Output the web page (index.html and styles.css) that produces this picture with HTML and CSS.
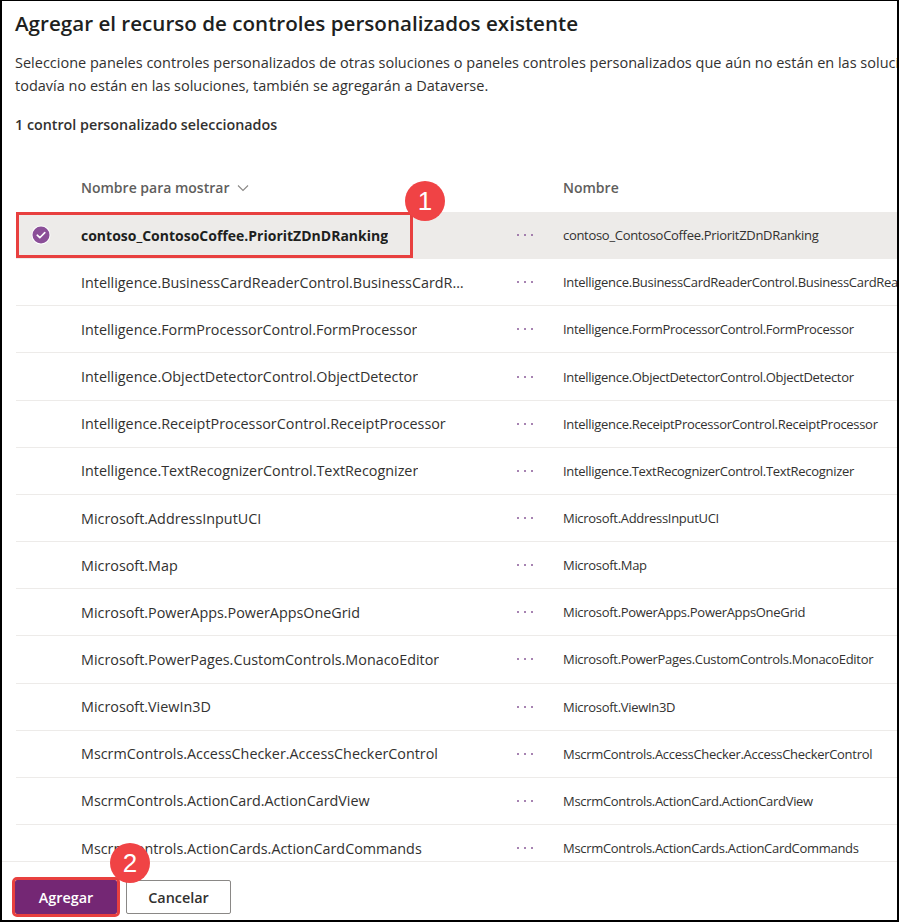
FILE: index.html
```html
<!DOCTYPE html>
<html lang="es">
<head>
<meta charset="utf-8">
<title>Agregar el recurso de controles personalizados existente</title>
<link rel="stylesheet" href="styles.css">
</head>
<body>
<div class="dialog">
  <header class="head">
    <h1 class="title">Agregar el recurso de controles personalizados existente</h1>
    <div class="desc">
      <div class="line">Seleccione paneles controles personalizados de otras soluciones o paneles controles personalizados que aún no están en las soluciones. Los paneles controles personalizados que</div>
      <div class="line">todavía no están en las soluciones, también se agregarán a Dataverse.</div>
    </div>
    <p class="count">1 control personalizado seleccionados</p>
  </header>

  <div class="list">
    <div class="row hdr">
      <div class="c-check"></div>
      <div class="c-name">Nombre para mostrar
        <svg class="chev" width="12" height="8" viewBox="0 0 12 8"><path d="M1 1.5 L6 6.5 L11 1.5" fill="none" stroke="#8a8886" stroke-width="1.1"/></svg>
      </div>
      <div class="c-dots"></div>
      <div class="c-id">Nombre</div>
    </div>

    <div class="row sel">
      <div class="c-check">
        <svg width="20" height="20" viewBox="0 0 20 20"><circle cx="10" cy="10" r="9.5" fill="#fff"/><circle cx="10" cy="10" r="8.5" fill="#8b4f98"/><path d="M6.2 10.2 L8.8 12.7 L13.8 7.6" fill="none" stroke="#fff" stroke-width="1.6" stroke-linecap="round" stroke-linejoin="round"/></svg>
      </div>
      <div class="c-name"><span class="t">contoso_ContosoCoffee.PrioritZDnDRanking</span></div>
      <div class="c-dots"><svg width="20" height="4" viewBox="0 0 20 4"><circle cx="3" cy="2" r="1" /><circle cx="10" cy="2" r="1"/><circle cx="17" cy="2" r="1"/></svg></div>
      <div class="c-id">contoso_ContosoCoffee.PrioritZDnDRanking</div>
    </div>

    <div class="row">
      <div class="c-check"></div>
      <div class="c-name"><span class="t">Intelligence.BusinessCardReaderControl.BusinessCardReader</span></div>
      <div class="c-dots"><svg width="20" height="4" viewBox="0 0 20 4"><circle cx="3" cy="2" r="1" /><circle cx="10" cy="2" r="1"/><circle cx="17" cy="2" r="1"/></svg></div>
      <div class="c-id">Intelligence.BusinessCardReaderControl.BusinessCardReader</div>
    </div>
    <div class="row">
      <div class="c-check"></div>
      <div class="c-name"><span class="t">Intelligence.FormProcessorControl.FormProcessor</span></div>
      <div class="c-dots"><svg width="20" height="4" viewBox="0 0 20 4"><circle cx="3" cy="2" r="1" /><circle cx="10" cy="2" r="1"/><circle cx="17" cy="2" r="1"/></svg></div>
      <div class="c-id">Intelligence.FormProcessorControl.FormProcessor</div>
    </div>
    <div class="row">
      <div class="c-check"></div>
      <div class="c-name"><span class="t">Intelligence.ObjectDetectorControl.ObjectDetector</span></div>
      <div class="c-dots"><svg width="20" height="4" viewBox="0 0 20 4"><circle cx="3" cy="2" r="1" /><circle cx="10" cy="2" r="1"/><circle cx="17" cy="2" r="1"/></svg></div>
      <div class="c-id">Intelligence.ObjectDetectorControl.ObjectDetector</div>
    </div>
    <div class="row">
      <div class="c-check"></div>
      <div class="c-name"><span class="t">Intelligence.ReceiptProcessorControl.ReceiptProcessor</span></div>
      <div class="c-dots"><svg width="20" height="4" viewBox="0 0 20 4"><circle cx="3" cy="2" r="1" /><circle cx="10" cy="2" r="1"/><circle cx="17" cy="2" r="1"/></svg></div>
      <div class="c-id">Intelligence.ReceiptProcessorControl.ReceiptProcessor</div>
    </div>
    <div class="row">
      <div class="c-check"></div>
      <div class="c-name"><span class="t">Intelligence.TextRecognizerControl.TextRecognizer</span></div>
      <div class="c-dots"><svg width="20" height="4" viewBox="0 0 20 4"><circle cx="3" cy="2" r="1" /><circle cx="10" cy="2" r="1"/><circle cx="17" cy="2" r="1"/></svg></div>
      <div class="c-id">Intelligence.TextRecognizerControl.TextRecognizer</div>
    </div>
    <div class="row">
      <div class="c-check"></div>
      <div class="c-name"><span class="t">Microsoft.AddressInputUCI</span></div>
      <div class="c-dots"><svg width="20" height="4" viewBox="0 0 20 4"><circle cx="3" cy="2" r="1" /><circle cx="10" cy="2" r="1"/><circle cx="17" cy="2" r="1"/></svg></div>
      <div class="c-id">Microsoft.AddressInputUCI</div>
    </div>
    <div class="row">
      <div class="c-check"></div>
      <div class="c-name"><span class="t">Microsoft.Map</span></div>
      <div class="c-dots"><svg width="20" height="4" viewBox="0 0 20 4"><circle cx="3" cy="2" r="1" /><circle cx="10" cy="2" r="1"/><circle cx="17" cy="2" r="1"/></svg></div>
      <div class="c-id">Microsoft.Map</div>
    </div>
    <div class="row">
      <div class="c-check"></div>
      <div class="c-name"><span class="t">Microsoft.PowerApps.PowerAppsOneGrid</span></div>
      <div class="c-dots"><svg width="20" height="4" viewBox="0 0 20 4"><circle cx="3" cy="2" r="1" /><circle cx="10" cy="2" r="1"/><circle cx="17" cy="2" r="1"/></svg></div>
      <div class="c-id">Microsoft.PowerApps.PowerAppsOneGrid</div>
    </div>
    <div class="row">
      <div class="c-check"></div>
      <div class="c-name"><span class="t">Microsoft.PowerPages.CustomControls.MonacoEditor</span></div>
      <div class="c-dots"><svg width="20" height="4" viewBox="0 0 20 4"><circle cx="3" cy="2" r="1" /><circle cx="10" cy="2" r="1"/><circle cx="17" cy="2" r="1"/></svg></div>
      <div class="c-id">Microsoft.PowerPages.CustomControls.MonacoEditor</div>
    </div>
    <div class="row">
      <div class="c-check"></div>
      <div class="c-name"><span class="t">Microsoft.ViewIn3D</span></div>
      <div class="c-dots"><svg width="20" height="4" viewBox="0 0 20 4"><circle cx="3" cy="2" r="1" /><circle cx="10" cy="2" r="1"/><circle cx="17" cy="2" r="1"/></svg></div>
      <div class="c-id">Microsoft.ViewIn3D</div>
    </div>
    <div class="row">
      <div class="c-check"></div>
      <div class="c-name"><span class="t">MscrmControls.AccessChecker.AccessCheckerControl</span></div>
      <div class="c-dots"><svg width="20" height="4" viewBox="0 0 20 4"><circle cx="3" cy="2" r="1" /><circle cx="10" cy="2" r="1"/><circle cx="17" cy="2" r="1"/></svg></div>
      <div class="c-id">MscrmControls.AccessChecker.AccessCheckerControl</div>
    </div>
    <div class="row">
      <div class="c-check"></div>
      <div class="c-name"><span class="t">MscrmControls.ActionCard.ActionCardView</span></div>
      <div class="c-dots"><svg width="20" height="4" viewBox="0 0 20 4"><circle cx="3" cy="2" r="1" /><circle cx="10" cy="2" r="1"/><circle cx="17" cy="2" r="1"/></svg></div>
      <div class="c-id">MscrmControls.ActionCard.ActionCardView</div>
    </div>
    <div class="row">
      <div class="c-check"></div>
      <div class="c-name"><span class="t">MscrmControls.ActionCards.ActionCardCommands</span></div>
      <div class="c-dots"><svg width="20" height="4" viewBox="0 0 20 4"><circle cx="3" cy="2" r="1" /><circle cx="10" cy="2" r="1"/><circle cx="17" cy="2" r="1"/></svg></div>
      <div class="c-id">MscrmControls.ActionCards.ActionCardCommands</div>
    </div>
    <div class="row">
      <div class="c-check"></div>
      <div class="c-name"><span class="t">MscrmControls.ActionHub.ActionHubControl</span></div>
      <div class="c-dots"></div>
      <div class="c-id">MscrmControls.ActionHub.ActionHubControl</div>
    </div>
  </div>

  <footer class="foot">
    <button class="btn primary">Agregar</button>
    <button class="btn">Cancelar</button>
  </footer>

  <div class="callout-box"></div>
  <div class="badge b1">1</div>
  <div class="badge b2">2</div>
</div>
</body>
</html>
```

FILE: styles.css
```css
* { box-sizing: border-box; }
html, body { margin: 0; padding: 0; background: #fff; }
body {
  font-family: "Open Sans", "Noto Sans", sans-serif;
  color: #323130;
}
.dialog {
  position: relative;
  width: 899px;
  height: 922px;
  border-style: solid;
  border-color: #000;
  border-width: 1px 2px 2px 2px;
  overflow: hidden;
  display: flex;
  flex-direction: column;
  background: #fff;
}
.head {
  padding: 8px 0 0 13px;
  flex: none;
  height: 164px;
}
.title {
  margin: 0;
  font-size: 20.6px;
  line-height: 29px;
  font-weight: 600;
  color: #201f1e;
  white-space: nowrap;
}
.desc {
  margin-top: 13px;
  font-size: 14.5px;
  line-height: 23px;
  color: #323130;
}
.desc .line { white-space: nowrap; }
.count {
  margin: 18px 0 0;
  font-size: 14.3px;
  line-height: 20px;
  font-weight: 600;
  color: #323130;
}
.list {
  flex: 1;
  margin-left: 14px;
  overflow: hidden;
  min-height: 0;
}
.row {
  display: grid;
  grid-template-columns: 65px 424px 58px 1fr;
  align-items: center;
  height: 47.17px;
  border-bottom: 1px solid #edebe9;
  font-size: 14.35px;
}
.row.hdr {
  height: 47px;
  padding-bottom: 2px;
  border-bottom: none;
  color: #605e5c;
  font-weight: 600;
  font-size: 14px;
}
.row.sel { background: #edebe9; }
.row.sel .c-name { font-weight: 700; color: #201f1e; font-size: 14px; }
.c-check { display: flex; justify-content: flex-start; padding-left: 15px; }
.c-check svg { display: block; }
.c-name {
  padding-right: 40px;
  white-space: nowrap;
  overflow: hidden;
  display: flex;
  align-items: center;
  gap: 8px;
}
.c-name .t {
  overflow: hidden;
  text-overflow: ellipsis;
  white-space: nowrap;
  display: block;
}
.chev { flex: none; margin-top: 1px; }
.c-dots { padding-left: 10px; display: flex; align-items: center; }
.c-dots svg { fill: #8a5a99; display: block; }
.c-id {
  font-size: 13px;
  letter-spacing: -0.3px;
  white-space: nowrap;
  overflow: hidden;
}
.row.hdr .c-id { font-size: 14px; letter-spacing: 0; }
.foot {
  flex: none;
  height: 59px;
  border-top: 1px solid #edebe9;
  padding: 18px 0 0 13px;
  display: flex;
  gap: 9px;
  align-items: flex-start;
}
.btn {
  font-family: inherit;
  font-size: 14.4px;
  font-weight: 600;
  height: 34px;
  padding: 0;
  border: 1px solid #8a8886;
  border-radius: 2px;
  background: #fff;
  color: #323130;
}
.btn.primary {
  background: #742774;
  border-color: #742774;
  color: #fff;
  width: 102px;
  outline: 3px solid #e8403f;
}
.btn:not(.primary) { width: 105px; }
.callout-box {
  position: absolute;
  left: 14px;
  top: 211px;
  width: 397px;
  height: 46px;
  border: 3px solid #e8403f;
}
.badge {
  position: absolute;
  width: 40px;
  height: 40px;
  border-radius: 50%;
  background: #f04345;
  color: #fff;
  font-size: 26px;
  line-height: 40px;
  text-align: center;
  font-family: "Liberation Sans", Arial, sans-serif;
}
.b1 { left: 403px; top: 180px; }
.b2 { left: 108px; top: 842px; }
```
